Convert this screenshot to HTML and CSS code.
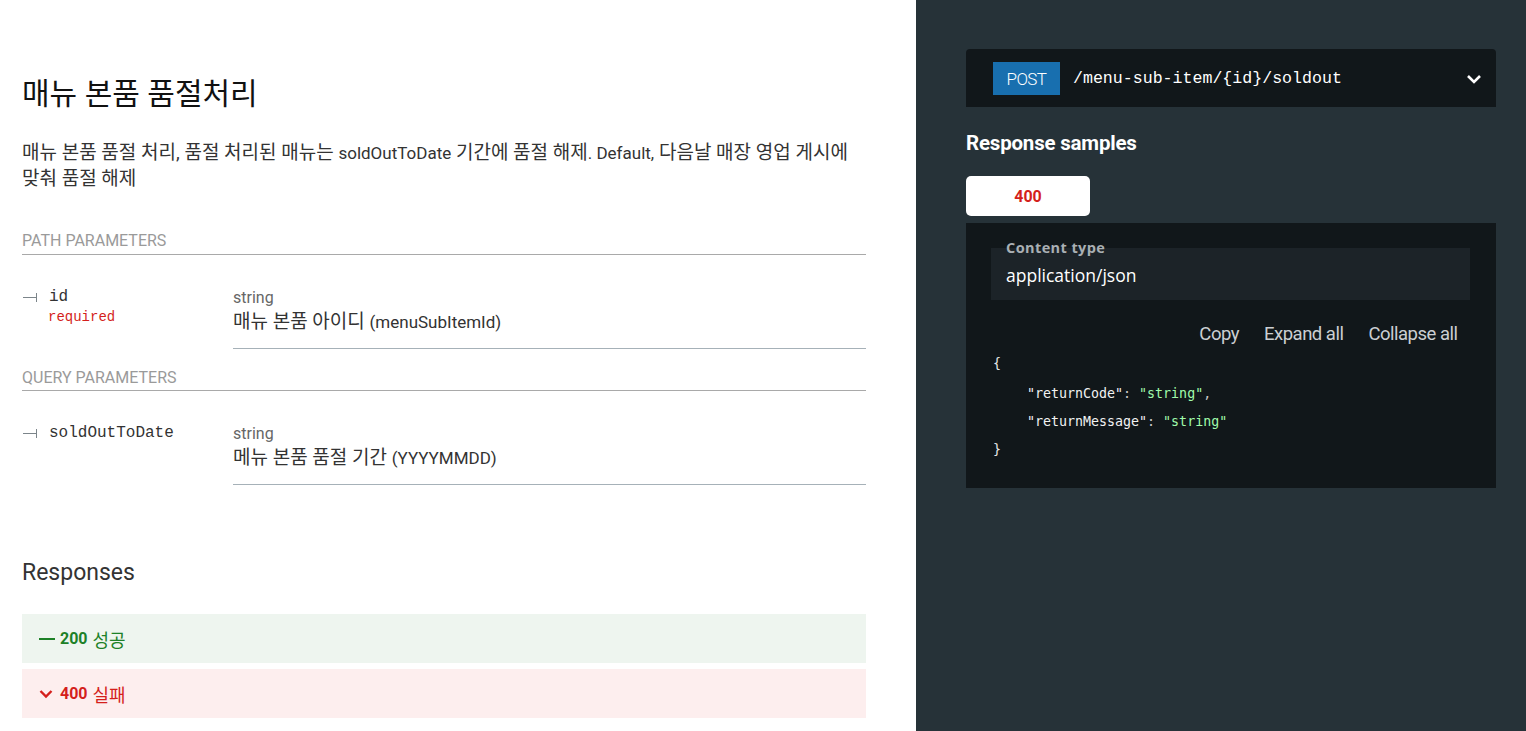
FILE: index.html
```html
<!DOCTYPE html>
<html lang="ko">
<head>
<meta charset="utf-8">
<title>매뉴 본품 품절처리</title>
<link rel="stylesheet" href="styles.css">
</head>
<body>
<div class="page">
  <main class="middle">
    <h2 class="title">매뉴 본품 품절처리</h2>
    <p class="desc">매뉴 본품 품절 처리, 품절 처리된 매뉴는 <span class="lat">soldOutToDate</span> 기간에 품절 해제<span class="lat">. Default,</span> 다음날 매장 영업 게시에 맞춰 품절 해제</p>

    <div class="params-head">PATH PARAMETERS</div>
    <div class="param">
      <div class="pname">
        <div class="pname-line"><span class="tree"></span><span class="mono">id</span></div>
        <div class="required">required</div>
      </div>
      <div class="pinfo">
        <div class="ptype">string</div>
        <div class="pdesc">매뉴 본품 아이디 <span class="lat">(menuSubItemId)</span></div>
      </div>
    </div>

    <div class="params-head second">QUERY PARAMETERS</div>
    <div class="param">
      <div class="pname">
        <div class="pname-line"><span class="tree"></span><span class="mono">soldOutToDate</span></div>
      </div>
      <div class="pinfo">
        <div class="ptype">string</div>
        <div class="pdesc">메뉴 본품 품절 기간 <span class="lat">(YYYYMMDD)</span></div>
      </div>
    </div>

    <h3 class="responses">Responses</h3>
    <div class="resp ok"><span class="dash"></span><strong>200</strong><span class="ko">성공</span></div>
    <div class="resp err">
      <svg class="chev" width="14" height="10" viewBox="0 0 14 10"><path d="M1.5 2 L7 7.5 L12.5 2" fill="none" stroke="#d41f1c" stroke-width="2.4"/></svg>
      <strong>400</strong><span class="ko">실패</span></div>
  </main>

  <aside class="right">
    <div class="endpoint">
      <span class="badge">POST</span>
      <span class="path">/menu-sub-item/{id}/soldout</span>
      <svg class="endchev" width="16" height="12" viewBox="0 0 16 12"><path d="M2 3 L8 9 L14 3" fill="none" stroke="#ffffff" stroke-width="2.6"/></svg>
    </div>
    <h3 class="samples">Response samples</h3>
    <div class="tabs"><span class="tab">400</span></div>
    <div class="panel">
      <div class="ctype">
        <span class="ctype-label">Content type</span>
        <span class="ctype-value">application/json</span>
      </div>
      <div class="buttons">
        <span class="btn">Copy</span>
        <span class="btn">Expand all</span>
        <span class="btn">Collapse all</span>
      </div>
      <div class="json">
        <div class="jl first">{</div>
        <div class="jl ind"><span class="key">"returnCode"</span><span class="punc">: </span><span class="str">"string"</span><span class="punc">,</span></div>
        <div class="jl ind"><span class="key">"returnMessage"</span><span class="punc">: </span><span class="str">"string"</span></div>
        <div class="jl">}</div>
      </div>
    </div>
  </aside>
</div>
</body>
</html>
```

FILE: styles.css
```css
* { box-sizing: border-box; }
html, body { margin: 0; padding: 0; }
body {
  font-family: Roboto, "Noto Sans CJK KR", sans-serif;
  background: #ffffff;
}
.page {
  display: flex;
  width: 1526px;
  height: 731px;
  overflow: hidden;
}
.middle {
  width: 916px;
  flex: none;
  padding: 0 50px 0 22px;
  background: #ffffff;
}
.lat { font-size: 17px; }
.title {
  margin: 75px 0 0 0;
  font-size: 30px;
  font-weight: 400;
  line-height: 38px;
  color: #111111;
}
.desc {
  margin: 27px 0 0 0;
  font-size: 19px;
  line-height: 25px;
  color: #333333;
  word-break: keep-all;
}
.params-head {
  margin-top: 39px;
  font-size: 16px;
  line-height: 22px;
  color: #9a9a9a;
  padding-bottom: 2px;
  border-bottom: 1px solid #a9a9a9;
}
.params-head.second { margin-top: 18px; padding-bottom: 1px; }
.param {
  display: grid;
  grid-template-columns: 211px 1fr;
  padding-top: 31px;
}
.pname { padding-top: 1px; }
.pname-line {
  display: flex;
  align-items: center;
  height: 20px;
}
.tree {
  position: relative;
  width: 14px;
  height: 1px;
  background: #7c858a;
  margin: 0 12px 0 1px;
}
.tree::after {
  content: "";
  position: absolute;
  right: 0;
  top: -4px;
  width: 1px;
  height: 9px;
  background: #7c858a;
}
.mono {
  font-family: "Liberation Mono", "Courier New", monospace;
  font-size: 16px;
  color: #333333;
}
.required {
  font-family: "Liberation Mono", "Courier New", monospace;
  font-size: 14px;
  line-height: 20px;
  color: #d41f1c;
  padding-left: 26px;
}
.pinfo {
  border-bottom: 1px solid #a6b1b8;
  padding-bottom: 13px;
}
.ptype {
  font-size: 16px;
  line-height: 22px;
  color: #666666;
  margin-top: 1px;
}
.pdesc {
  font-size: 19px;
  line-height: 26px;
  color: #333333;
}
.responses {
  margin: 73px 0 0 0;
  font-size: 23px;
  font-weight: 400;
  line-height: 30px;
  color: #333333;
}
.resp {
  display: flex;
  align-items: center;
  height: 49px;
  padding-left: 17px;
  font-size: 16px;
  margin-top: 6px;
}
.resp .ko { font-size: 18px; }
.resp.ok {
  margin-top: 26px;
  background: #eef5ef;
  color: #1d8127;
}
.resp.err {
  background: #fdeeee;
  color: #d41f1c;
}
.resp strong { font-weight: 700; margin-right: 5px; }
.dash {
  width: 16px;
  height: 2px;
  background: #1d8127;
  margin-right: 5px;
}
.chev { margin-right: 7px; }

.right {
  width: 610px;
  flex: none;
  background: #263238;
  padding: 49px 30px 0 50px;
}
.endpoint {
  display: flex;
  align-items: center;
  height: 58px;
  background: #11171a;
  border-radius: 4px 4px 0 0;
  padding: 1px 14px 0 27px;
}
.badge {
  display: flex;
  align-items: center;
  justify-content: center;
  width: 67px;
  height: 33px;
  background: #186faf;
  color: #ffffff;
  font-size: 17px;
  font-weight: 300;
  letter-spacing: -0.6px;
}
.path {
  flex: 1;
  margin-left: 13px;
  font-family: "Liberation Mono", "Courier New", monospace;
  font-size: 16.6px;
  color: #ffffff;
}
.samples {
  margin: 23px 0 0 0;
  font-size: 20.5px;
  font-weight: 700;
  line-height: 26px;
  color: #ffffff;
  letter-spacing: -0.2px;
}
.tabs {
  display: flex;
  margin-top: 20px;
}
.tab {
  display: flex;
  align-items: center;
  justify-content: center;
  width: 124px;
  height: 40px;
  background: #ffffff;
  border-radius: 5px;
  color: #d41f1c;
  font-size: 16px;
  font-weight: 700;
}
.panel {
  margin-top: 7px;
  background: #11171a;
  height: 265px;
  padding: 25px 26px 0 25px;
}
.ctype {
  position: relative;
  height: 52px;
  background: #1c2328;
  display: flex;
  align-items: center;
  padding: 0 15px;
}
.ctype-label {
  position: absolute;
  left: 15px;
  top: -9px;
  font-family: "Open Sans", Lato, sans-serif;
  font-size: 14.5px;
  font-weight: 700;
  line-height: 18px;
  letter-spacing: 0.4px;
  color: #a9afb3;
}
.ctype-value {
  margin-top: 1px;
  font-family: "Open Sans", Lato, sans-serif;
  font-size: 17.5px;
  color: #ffffff;
}
.buttons {
  display: flex;
  justify-content: flex-end;
  margin-top: 22px;
}
.btn {
  padding: 0 12.5px;
  font-size: 18.5px;
  line-height: 24px;
  color: #cbcfd2;
  letter-spacing: -0.5px;
}
.json {
  margin-top: 4px;
  font-family: "DejaVu Sans Mono", monospace;
  font-size: 13.3px;
  color: #e8e8e8;
  padding-left: 2px;
}
.jl { line-height: 28px; }
.jl.first { margin-bottom: 2px; }
.jl.ind { padding-left: 34px; }
.key { color: #f2f2f2; }
.str { color: #a0fbaa; }
.punc { color: #c8c8c8; }
```
